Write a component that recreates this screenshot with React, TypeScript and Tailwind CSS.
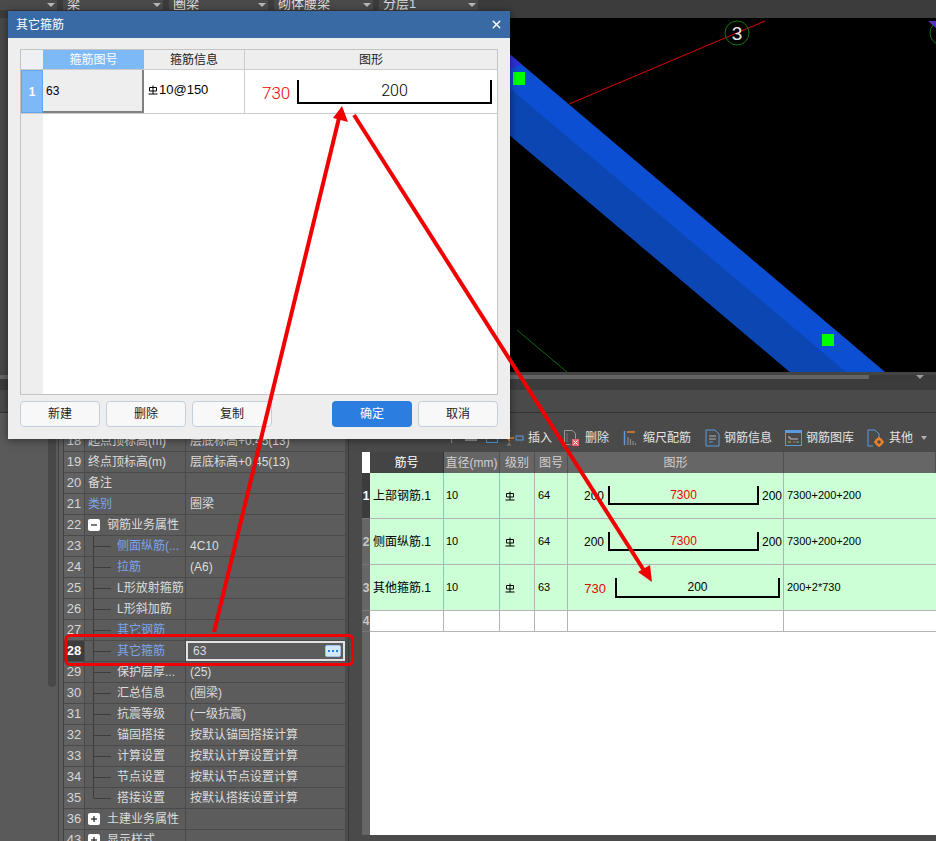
import React from 'react';
import { X } from 'lucide-react';

const font = "font-['Liberation_Sans','Noto_Sans_CJK_SC',sans-serif]";

// property panel rows
const props = [
  { no: '18', name: '起点顶标高(m)', value: '层底标高+0.45(13)' },
  { no: '19', name: '终点顶标高(m)', value: '层底标高+0.45(13)' },
  { no: '20', name: '备注', value: '' },
  { no: '21', name: '类别', value: '圈梁', blue: true },
  { no: '22', name: '钢筋业务属性', value: '', group: 'minus' },
  { no: '23', name: '侧面纵筋(...', value: '4C10', child: true, blue: true },
  { no: '24', name: '拉筋', value: '(A6)', child: true, blue: true },
  { no: '25', name: 'L形放射箍筋', value: '', child: true },
  { no: '26', name: 'L形斜加筋', value: '', child: true },
  { no: '27', name: '其它钢筋', value: '', child: true, blue: true },
  { no: '28', name: '其它箍筋', value: '63', child: true, blue: true, active: true },
  { no: '29', name: '保护层厚...', value: '(25)', child: true },
  { no: '30', name: '汇总信息', value: '(圈梁)', child: true },
  { no: '31', name: '抗震等级', value: '(一级抗震)', child: true },
  { no: '32', name: '锚固搭接', value: '按默认锚固搭接计算', child: true },
  { no: '33', name: '计算设置', value: '按默认计算设置计算', child: true },
  { no: '34', name: '节点设置', value: '按默认节点设置计算', child: true },
  { no: '35', name: '搭接设置', value: '按默认搭接设置计算', child: true, last: true },
  { no: '36', name: '土建业务属性', value: '', group: 'plus' },
  { no: '43', name: '显示样式', value: '', group: 'plus' },
];

const bars = [
  { no: '1', name: '上部钢筋.1', pic: '64', formula: '7300+200+200', selected: true },
  { no: '2', name: '侧面纵筋.1', pic: '64', formula: '7300+200+200' },
  { no: '3', name: '其他箍筋.1', pic: '63', formula: '200+2*730', stirrup: true },
];

const GradeMark = () => (
  <svg width="10" height="10" viewBox="0 0 10 10" fill="none" stroke="#000" strokeWidth="1" className="shrink-0">
    <path d="M1.5 2.5h7v3.5h-7zM5 0.5v8.5M0.5 9h9" />
  </svg>
);

const Shape = ({ main, mainRed, w, h, size, stroke }: { main: string; mainRed?: boolean; w: number; h: number; size: string; stroke: string }) => (
  <div
    className={`flex justify-center border-x-2 border-b-2 border-black shrink-0 ${stroke} ${size} ${mainRed ? 'text-[#f00000]' : 'text-black'}`}
    style={{ width: w, height: h }}
  >
    <span className="leading-none">{main}</span>
  </div>
);

const TreeBox = ({ kind }: { kind: string }) => (
  <span className="w-[12px] h-[12px] bg-white rounded-[2px] flex items-center justify-center shrink-0">
    <svg width="8" height="8" viewBox="0 0 8 8" stroke="#222" strokeWidth="1.2">
      <path d="M1 4h6" />
      {kind === 'plus' && <path d="M4 1v6" />}
    </svg>
  </span>
);

const PropRow = ({ row }: { row: (typeof props)[number] }) => (
  <div className="grid grid-cols-[21px_101px_159px] h-[21px] border-b border-[#4a4a4a] text-xs text-[#dcdcdc]">
    <div
      className={`flex items-center justify-center border-r border-[#4a4a4a] text-[13px] ${
        row.active ? 'bg-[#3c3c3c] text-white font-bold' : 'bg-[#626262] text-[#d6d6d6]'
      }`}
    >
      {row.no}
    </div>
    <div className={`flex items-center border-r border-[#4a4a4a] whitespace-nowrap overflow-hidden ${row.blue ? 'text-[#7ca4ee]' : ''}`}>
      {row.group ? (
        <span className="flex items-center pl-[3px] gap-[7px]">
          <TreeBox kind={row.group} />
          {row.name}
        </span>
      ) : row.child ? (
        <span className="flex items-center pl-[8px] h-full w-full">
          <span className={`w-px bg-[#3c3c3c] ${row.last ? 'h-1/2 self-start' : 'h-full'}`} />
          <span className="w-[17px] h-px bg-[#3c3c3c]" />
          <span className="ml-[6px]">{row.name}</span>
        </span>
      ) : (
        <span className="pl-[3px]">{row.name}</span>
      )}
    </div>
    {row.active ? (
      <div className="flex items-center justify-between border-2 border-[#e2e2e2] pl-[5px] pr-[2px]">
        <span>{row.value}</span>
        <span className="w-[16px] h-[12px] bg-[#d4e8fc] border border-[#9cc4ee] rounded-[2px] text-[#2c7de0] flex items-center justify-center gap-[2px]">
          <i className="w-[2px] h-[2px] bg-[#2c7de0]" />
          <i className="w-[2px] h-[2px] bg-[#2c7de0]" />
          <i className="w-[2px] h-[2px] bg-[#2c7de0]" />
        </span>
      </div>
    ) : (
      <div className="flex items-center pl-[4px] whitespace-nowrap">{row.value}</div>
    )}
  </div>
);

const ToolIcon = ({ kind }: { kind: string }) => {
  if (kind === 'insert')
    return (
      <svg width="18" height="18" viewBox="0 0 18 18" fill="none" className="shrink-0">
        <path d="M1 2h4M1 16h4M3 2v3M3 13v3" stroke="#8a8a8a" />
        <path d="M8 9H1M4 6 1 9l3 3" stroke="#e8832a" strokeWidth="1.5" />
        <rect x="10" y="7" width="7" height="4" stroke="#5b9bdc" />
      </svg>
    );
  if (kind === 'delete')
    return (
      <svg width="18" height="18" viewBox="0 0 18 18" fill="none" className="shrink-0">
        <path d="M1.5 15.5V1.5h8l3 3v5M1.5 15.5h6" stroke="#9a9a9a" />
        <path d="M4 4v9" stroke="#777" />
        <rect x="9" y="10" width="7" height="7" fill="#e0666b" />
        <path d="m10.5 11.5 4 4m0-4-4 4" stroke="#fff" />
      </svg>
    );
  if (kind === 'scale')
    return (
      <svg width="16" height="18" viewBox="0 0 16 18" fill="none" className="shrink-0">
        <path d="M1.5 2v14" stroke="#5b9bdc" strokeWidth="1.5" />
        <path d="M4 3h8" stroke="#e8832a" strokeWidth="1.5" />
        <path d="M5 16V8M7.5 16v-6M10 16v-4M12.5 16v-2" stroke="#8a8a8a" strokeWidth="1.2" />
      </svg>
    );
  if (kind === 'info')
    return (
      <svg width="15" height="18" viewBox="0 0 15 18" fill="none" className="shrink-0">
        <path d="M1 17V1h9l4 4v12z" stroke="#5b9bdc" />
        <path d="M4 7h7M4 10h7" stroke="#b0b0b0" />
        <path d="M4 13h4" stroke="#5b9bdc" />
      </svg>
    );
  if (kind === 'lib')
    return (
      <svg width="17" height="16" viewBox="0 0 17 16" fill="none" className="shrink-0">
        <rect x="0.5" y="0.5" width="16" height="15" stroke="#5b9bdc" />
        <path d="M1 2h15" stroke="#5b9bdc" strokeWidth="2" />
        <path d="M3 7h2v2h8" stroke="#b8b8b8" />
        <path d="M3 12h3" stroke="#d8a23a" />
        <path d="M8 12h2" stroke="#e06060" />
        <path d="M11 12h3" stroke="#6cb86c" />
      </svg>
    );
  return (
    <svg width="18" height="18" viewBox="0 0 18 18" fill="none" className="shrink-0">
      <path d="M6 17H1V1h7l4 4v3" stroke="#5b9bdc" />
      <circle cx="12" cy="13" r="3" stroke="#e8832a" strokeWidth="2.4" />
      <path d="M12 8v2M12 16v2M7 13h2M15 13h2" stroke="#e8832a" strokeWidth="1.6" />
    </svg>
  );
};

const Tool = ({ icon, label, w }: { icon: string; label: string; w: string }) => (
  <div className={`flex items-center gap-[4px] ${w}`}>
    <ToolIcon kind={icon} />
    <span className="text-xs text-[#e4e4e4] whitespace-nowrap">{label}</span>
  </div>
);

const Btn = ({ label, primary, w = 'w-[80px]' }: { label: string; primary?: boolean; w?: string }) => (
  <button
    className={`h-[26px] ${w} rounded-[4px] text-xs ${
      primary ? 'bg-[#2c7de0] text-white' : 'bg-[#f8f8f8] border border-[#c5cedc] text-[#222]'
    }`}
  >
    {label}
  </button>
);

const TopSelect = ({ label, w }: { label?: string; w: string }) => (
  <div className={`h-[10px] bg-[#4b4b4b] flex items-end justify-between overflow-hidden ${w}`}>
    <span className="text-[13px] text-[#dedede] leading-[14px] pl-[4px] -mb-[1px]">{label}</span>
    <span className="mr-[2px] mb-[3px] w-0 h-0 border-x-[4px] border-x-transparent border-t-[4px] border-t-[#b8b8b8]" />
  </div>
);

export default function App() {
  return (
    <div className={`relative w-[936px] h-[841px] overflow-hidden flex flex-col bg-[#484848] ${font}`}>
      {/* top selects */}
      <div className="h-[18px] bg-[#3c3c3c] flex gap-[6px] shrink-0">
        <TopSelect w="w-[57px]" />
        <TopSelect label="梁" w="w-[100px]" />
        <TopSelect label="圈梁" w="w-[99px]" />
        <TopSelect label="砌体腰梁" w="w-[99px]" />
        <TopSelect label="分层1" w="w-[99px]" />
      </div>

      {/* drawing area */}
      <div className="flex shrink-0">
        <div className="w-[20px] bg-[#484848]" />
        <svg className="block bg-black" width="916" height="354" viewBox="20 18 916 354">
          <polygon points="500,46 885,372 790,372 480,110" fill="#0d4fd2" />
          <polygon points="500,80 846,372 790,372 480,110" fill="#0b46b2" />
          <polygon points="505,50 522,65 505,70" fill="#2f2fd8" />
          <rect x="513" y="72" width="12" height="13" fill="#00ff00" />
          <rect x="822" y="334" width="12" height="12" fill="#00ff00" />
          <line x1="569" y1="104" x2="765" y2="21" stroke="#e00000" strokeWidth="1" />
          <circle cx="737" cy="33" r="12" fill="none" stroke="#0a7a0a" strokeWidth="1" />
          <text x="737" y="40" textAnchor="middle" fontSize="19" fill="#e8e8e8" fontFamily="Liberation Sans">3</text>
          <line x1="517" y1="330" x2="567" y2="372" stroke="#0a6a0a" strokeWidth="1" />
          <circle cx="942" cy="33" r="12" fill="none" stroke="#0a7a0a" strokeWidth="1" />
          <polygon points="928,21 936,21 936,28" fill="#5a30c0" />
        </svg>
      </div>

      {/* splitter + horizontal scrollbar */}
      <div className="h-[3px] bg-[#444444] shrink-0" />
      <div className="h-[4px] bg-[#3a3a3a] shrink-0 flex items-center">
        <div className="w-[869px] h-full bg-[#646464]" />
        <span className="ml-[47px] w-0 h-0 border-x-[4px] border-x-transparent border-t-[4px] border-t-[#9a9a9a]" />
      </div>
      <div className="h-[11px] bg-[#3c3c3c] shrink-0" />
      <div className="h-[23px] bg-[#4a4a4a] border-b border-[#333333] shrink-0" />

      <div className="flex-1 min-h-0 flex bg-[#4a4a4a]">
        {/* left dock strip */}
        <div className="w-[48px] bg-[#5a5a5a] shrink-0" />
        <div className="w-[10px] bg-[#5a5a5a] shrink-0">
          <div className="w-[8px] h-[274px] bg-[#484848] rounded-b-[4px]" />
        </div>
        <div className="w-[6px] bg-[#5e5e5e] border-x border-[#404040] shrink-0" />

        {/* property table */}
        <div className="w-[281px] shrink-0 pt-[18px] bg-[#5c5c5c]">
          {props.map((row) => (
            <PropRow key={row.no} row={row} />
          ))}
        </div>
        <div className="w-[4px] bg-[#4c4c4c] border-r border-[#3a3a3a] shrink-0" />
        <div className="w-[13px] shrink-0" />

        {/* rebar grid */}
        <div className="flex-1 min-w-0 flex flex-col pb-[6px]">
          <div className="h-[39px] shrink-0 flex items-center pt-[10px] pl-[89px] text-[#e4e4e4]">
            <span className="w-px h-[10px] bg-[#9a9a9a]" />
            <span className="w-[12px] h-[6px] bg-[#9a9a9a] ml-[13px]" />
            <span className="w-[12px] h-[10px] border border-[#5b9bdc] ml-[9px] mr-[8px]" />
            <Tool icon="insert" label="插入" w="w-[57px]" />
            <Tool icon="delete" label="删除" w="w-[60px]" />
            <Tool icon="scale" label="缩尺配筋" w="w-[82px]" />
            <Tool icon="info" label="钢筋信息" w="w-[80px]" />
            <Tool icon="lib" label="钢筋图库" w="w-[82px]" />
            <Tool icon="other" label="其他" w="w-[54px]" />
            <span className="w-0 h-0 border-x-[3px] border-x-transparent border-t-[4px] border-t-[#b0b0b0]" />
          </div>
          <div className="grid grid-cols-[8px_74px_56px_35px_33px_216px_1fr] grid-rows-[21px_46px_46px_46px_21px] text-xs bg-white">
            <div className="bg-white" />
            <div className="bg-[#444444] text-white flex items-center justify-center border-r border-[#333333]">筋号</div>
            {['直径(mm)', '级别', '图号', '图形', ''].map((h, i) => (
              <div key={i} className="bg-[#666666] text-[#d0d0d0] flex items-center justify-center border-r border-[#505050] whitespace-nowrap">
                {h}
              </div>
            ))}

            {bars.map((b) => (
              <React.Fragment key={b.no}>
                <div className={`flex items-center justify-center text-xs font-bold border-b border-[#777777] ${b.selected ? 'bg-[#3c3c3c] text-white' : 'bg-[#666666] text-[#c8c8c8]'}`}>
                  {b.no}
                </div>
                <div className="bg-[#ccffd6] border-r border-b border-[#b4b4b4] flex items-center pl-[3px] text-black whitespace-nowrap">{b.name}</div>
                <div className="bg-[#ccffd6] border-r border-b border-[#b4b4b4] flex items-center pl-[2px] text-black text-[11px]">10</div>
                <div className="bg-[#ccffd6] border-r border-b border-[#b4b4b4] flex items-center pl-[5px]"><GradeMark /></div>
                <div className="bg-[#ccffd6] border-r border-b border-[#b4b4b4] flex items-center pl-[3px] text-black text-[11px]">{b.pic}</div>
                <div className="bg-[#ccffd6] border-r border-b border-[#b4b4b4] flex items-center whitespace-nowrap">
                  {b.stirrup ? (
                    <>
                      <span className="text-[#f00000] text-[13px] w-[38px] text-right mt-[3px]">730</span>
                      <span className="w-[9px]" />
                      <Shape main="200" w={165} h={20} size="text-[12px]" stroke="pt-[3px]" />
                    </>
                  ) : (
                    <>
                      <span className="text-[12px] text-black w-[36px] text-right">200</span>
                      <span className="w-[4px]" />
                      <Shape main="7300" mainRed w={151} h={19} size="text-[12px]" stroke="pt-[3px]" />
                      <span className="text-[12px] text-black ml-[3px]">200</span>
                    </>
                  )}
                </div>
                <div className="bg-[#ccffd6] border-b border-[#b4b4b4] flex items-center pl-[3px] text-black text-[11px]">{b.formula}</div>
              </React.Fragment>
            ))}

            <div className="bg-[#666666] text-[#c8c8c8] font-bold flex items-center justify-center border-b border-[#777777]">4</div>
            {[0, 1, 2, 3, 4].map((i) => (
              <div key={i} className="border-r border-b border-[#b4b4b4]" />
            ))}
            <div className="border-b border-[#b4b4b4]" />
          </div>
          <div className="flex-1 flex">
            <div className="w-[8px] bg-[#666666]" />
            <div className="flex-1 bg-white" />
          </div>
        </div>
      </div>

      {/* dialog */}
      <div className="absolute left-[8px] top-[11px] w-[502px] h-[428px] bg-[#eeeeee] shadow-[0_1px_8px_rgba(0,0,0,0.5)] flex flex-col">
        <div className="h-[27px] bg-[#3a6aa3] flex items-center justify-between pl-[8px] pr-[7px] text-xs text-white shrink-0">
          <span>其它箍筋</span>
          <X size={13} strokeWidth={2.5} />
        </div>
        <div className="flex-1 flex flex-col px-[12px] pt-[11px] pb-[12px]">
          <div className="h-[346px] border border-[#c4c4c4] bg-white flex flex-col text-xs">
            <div className="grid grid-cols-[22px_101px_101px_1fr] h-[20px] bg-[#eeeeee] border-b border-[#cccccc] shrink-0">
              <div className="bg-[#eef0f4]" />
              <div className="bg-[#7eb9f7] text-white flex items-center justify-center">箍筋图号</div>
              <div className="text-[#222] flex items-center justify-center border-r border-[#cccccc]">箍筋信息</div>
              <div className="text-[#222] flex items-center justify-center">图形</div>
            </div>
            <div className="grid grid-cols-[22px_101px_101px_1fr] h-[44px] border-b border-[#cccccc] shrink-0">
              <div className="bg-[#7eb9f7] border border-[#64a5ec] text-white font-bold flex items-center justify-center">1</div>
              <div className="bg-[#eeeeee] border-r-2 border-b-2 border-[#808080] flex items-center pl-[3px] text-black">63</div>
              <div className="flex items-center pl-[4px] border-r border-[#cccccc] text-black -mt-[3px] gap-[1px]">
                <GradeMark />
                <span className="text-[13px]">10@150</span>
              </div>
              <div className="flex items-center pl-[17px]">
                <span className="font-['Roboto'] text-[#f00000] text-[17px] font-light w-[27px] mt-[4px] leading-none">730</span>
                <span className="w-[8px]" />
                <Shape main="200" w={195} h={24} size="font-['Roboto'] font-light text-[16px]" stroke="pt-[3px]" />
              </div>
            </div>
            <div className="flex-1 flex">
              <div className="w-[22px] bg-[#eeeeee]" />
            </div>
          </div>
          <div className="flex items-center mt-[6px]">
            <Btn label="新建" />
            <span className="w-[6px]" />
            <Btn label="删除" />
            <span className="w-[6px]" />
            <Btn label="复制" />
            <span className="w-[60px]" />
            <Btn label="确定" primary />
            <span className="w-[6px]" />
            <Btn label="取消" />
          </div>
        </div>
      </div>

      {/* red annotations */}
      <svg className="absolute inset-0 pointer-events-none" width="936" height="841" fill="none">
        <line x1="214" y1="632" x2="339" y2="118" stroke="#f00000" strokeWidth="4" />
        <polygon points="342,106 348,122 333,118" fill="#f00000" />
        <line x1="354" y1="115" x2="645" y2="572" stroke="#f00000" strokeWidth="4" />
        <polygon points="652,582 638,572 650,565" fill="#f00000" />
        <rect x="66" y="635.5" width="286.5" height="29" rx="4" stroke="#f00000" strokeWidth="3" />
      </svg>
    </div>
  );
}
